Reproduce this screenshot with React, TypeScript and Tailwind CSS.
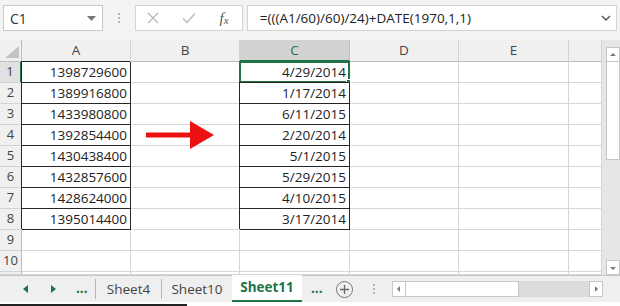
import React from "react";

const numbers = [
  "1398729600",
  "1389916800",
  "1433980800",
  "1392854400",
  "1430438400",
  "1432857600",
  "1428624000",
  "1395014400",
];

const dates = [
  "4/29/2014",
  "1/17/2014",
  "6/11/2015",
  "2/20/2014",
  "5/1/2015",
  "5/29/2015",
  "4/10/2015",
  "3/17/2014",
];

const columns = ["A", "B", "C", "D", "E", ""];
const GREEN = "#217346";

function HeaderCell({ label, selected }: { label: string; selected?: boolean }) {
  return (
    <div
      className={`flex items-center justify-center border-r border-b text-[13.5px] ${
        selected
          ? "bg-[#d2d2d2] text-[#217346] border-r-[#c0c0c0] border-b-2 border-b-[#217346]"
          : "bg-[#f0f0f0] text-[#444] border-r-[#d4d4d4] border-b-[#bdbdbd]"
      }`}
    >
      {label}
    </div>
  );
}

function Cell({
  value,
  boxed,
  selected,
}: {
  value?: string;
  boxed?: boolean;
  selected?: boolean;
}) {
  return (
    <div
      className={`relative flex items-center justify-end bg-white pr-[3px] text-[13.5px] text-[#222] border-r border-b ${
        boxed
          ? "border-[#262626] shadow-[-1px_-1px_0_#262626]"
          : "border-[#d6d6d6]"
      }`}
    >
      {value}
      {selected && (
        <>
          <div className="absolute -left-px -top-px -right-px -bottom-px border-2 border-[#217346]" />
          <div className="absolute -right-[3px] -bottom-[3px] h-[5px] w-[5px] bg-[#217346] outline outline-1 outline-white" />
        </>
      )}
    </div>
  );
}

function ScrollButton({ dir }: { dir: "up" | "down" }) {
  const pts = dir === "up" ? "2,6 5,3 8,6" : "2,4 5,7 8,4";
  return (
    <div className="flex h-[15px] w-[14px] items-center justify-center border border-[#c6c6c6] bg-white">
      <svg width="10" height="10" viewBox="0 0 10 10">
        <polygon points={pts} fill="#7a7a7a" />
      </svg>
    </div>
  );
}

export default function App() {
  return (
    <div className="h-[306px] w-[620px] overflow-hidden bg-[#f3f3f3] font-['Open_Sans',sans-serif]">
      {/* Formula bar */}
      <div className="flex h-[40px] items-start px-[3px] pt-[5px]">
        <div className="flex h-[26px] w-[100px] items-center justify-between border border-[#c9c9c9] bg-white pl-[6px] pr-[6px] text-[14px] text-[#333]">
          <span>C1</span>
          <svg width="9" height="5" viewBox="0 0 9 5">
            <polygon points="0,0 9,0 4.5,5" fill="#777" />
          </svg>
        </div>
        <div className="flex h-[26px] w-[32px] flex-col items-center justify-center gap-[2px]">
          <span className="h-[2px] w-[2px] bg-[#b5b5b5]" />
          <span className="h-[2px] w-[2px] bg-[#b5b5b5]" />
          <span className="h-[2px] w-[2px] bg-[#b5b5b5]" />
        </div>
        <div className="flex h-[26px] w-[108px] items-center border border-[#d4d4d4] bg-white">
          <div className="flex w-[36px] justify-center">
            <svg width="12" height="12" viewBox="0 0 12 12">
              <path d="M1 1 L11 11 M11 1 L1 11" stroke="#b8b8b8" strokeWidth="1.3" />
            </svg>
          </div>
          <div className="flex w-[36px] justify-center">
            <svg width="14" height="12" viewBox="0 0 14 12">
              <path d="M1 6.5 L5 10.5 L13 1.5" stroke="#b8b8b8" strokeWidth="1.3" fill="none" />
            </svg>
          </div>
          <div className="flex w-[36px] items-baseline justify-center font-['Liberation_Serif',serif] italic text-[#555]">
            <span className="text-[15px] leading-none">f</span>
            <span className="text-[11px] leading-none translate-y-[1px]">x</span>
          </div>
        </div>
        <div className="ml-[4px] flex h-[26px] w-[371px] items-center justify-between border border-[#d4d4d4] bg-white pl-[12px] pr-[5px] text-[13.5px] text-[#222]">
          <span>=(((A1/60)/60)/24)+DATE(1970,1,1)</span>
          <svg width="10" height="6" viewBox="0 0 10 6">
            <path d="M1 1 L5 5 L9 1" stroke="#555" strokeWidth="1.4" fill="none" />
          </svg>
        </div>
      </div>

      {/* Sheet area */}
      <div className="flex h-[235px]">
        <div className="relative grid w-[602px] grid-cols-[22px_109px_109px_110px_109px_110px_33px] grid-rows-[22px_repeat(10,21px)_3px] border-r border-[#c6c6c6] bg-white">
          <div className="flex items-end justify-end border-r border-b border-[#bdbdbd] bg-[#f0f0f0] pb-[3px] pr-[2px]">
            <svg width="14" height="12" viewBox="0 0 14 12">
              <polygon points="14,0 14,12 0,12" fill="#c4c4c4" />
            </svg>
          </div>
          {columns.map((c, i) => (
            <HeaderCell key={i} label={c} selected={c === "C"} />
          ))}

          {Array.from({ length: 11 }).map((_, r) => (
            <React.Fragment key={r}>
              <div
                className={`flex items-center justify-center border-b text-[13px] text-[#444] ${
                  r === 0
                    ? "bg-[#e1e1e1] border-r-2 border-r-[#217346] border-b-[#d4d4d4]"
                    : "bg-[#f0f0f0] border-r border-r-[#bdbdbd] border-b-[#d4d4d4]"
                }`}
              >
                {r < 10 ? r + 1 : ""}
              </div>
              <Cell value={numbers[r]} boxed={r < 8} />
              <Cell />
              <Cell value={dates[r]} boxed={r < 8} selected={r === 0} />
              <Cell />
              <Cell />
              <Cell />
            </React.Fragment>
          ))}

          {/* red arrow */}
          <svg
            className="absolute left-[146px] top-[81px]"
            width="68"
            height="28"
            viewBox="0 0 68 28"
          >
            <rect x="0" y="11.5" width="46" height="5" fill="#ee1111" />
            <polygon points="44,0 68,14 44,28" fill="#ee1111" />
          </svg>
        </div>

        {/* vertical scrollbar */}
        <div className="flex w-[18px] flex-col bg-[#e6e6e6] pl-[4px] pt-[7px]">
          <ScrollButton dir="up" />
          <div className="h-[98px] w-[14px] border-x border-b border-[#c6c6c6] bg-white" />
          <div className="flex-1" />
          <ScrollButton dir="down" />
        </div>
      </div>

      {/* Sheet tabs */}
      <div className="flex h-[27px] items-center border-t border-[#c6c6c6] bg-[#efefef] text-[13.5px] text-[#444]">
        <div className="ml-[18px] flex w-[14px] justify-center">
          <svg width="5" height="8" viewBox="0 0 5 8">
            <polygon points="5,0 0,4 5,8" fill={GREEN} />
          </svg>
        </div>
        <div className="ml-[14px] flex w-[14px] justify-center">
          <svg width="5" height="8" viewBox="0 0 5 8">
            <polygon points="0,0 5,4 0,8" fill={GREEN} />
          </svg>
        </div>
        <span className="ml-[16px] w-[12px] font-bold leading-none text-[#217346]">...</span>
        <span className="ml-[7px] h-[20px] w-px bg-[#b4b4b4]" />
        <div className="flex w-[65px] justify-center">Sheet4</div>
        <span className="h-[20px] w-px bg-[#b4b4b4]" />
        <div className="flex w-[70px] justify-center">Sheet10</div>
        <div className="-mt-px flex h-[27px] w-[70px] items-center justify-center self-start border-b-2 border-[#217346] bg-white font-bold text-[#217346]">
          Sheet11
        </div>
        <span className="ml-[9px] w-[12px] font-bold leading-none text-[#217346]">...</span>
        <div className="ml-[13px] flex h-[17px] w-[17px] items-center justify-center rounded-full border border-[#777]">
          <svg width="9" height="9" viewBox="0 0 9 9">
            <path d="M4.5 0 V9 M0 4.5 H9" stroke="#666" strokeWidth="1.3" />
          </svg>
        </div>
        <div className="ml-[20px] flex w-[2px] flex-col gap-[2px]">
          <span className="h-[2px] w-[2px] bg-[#b5b5b5]" />
          <span className="h-[2px] w-[2px] bg-[#b5b5b5]" />
          <span className="h-[2px] w-[2px] bg-[#b5b5b5]" />
        </div>
        <div className="ml-[17px] flex h-[16px] w-[211px] items-stretch bg-[#dcdcdc]">
          <div className="flex w-[14px] items-center justify-center border border-[#c6c6c6] bg-white">
            <svg width="10" height="10" viewBox="0 0 10 10">
              <polygon points="6,2 3,5 6,8" fill="#7a7a7a" />
            </svg>
          </div>
          <div className="w-[113px] border-y border-r border-[#c6c6c6] bg-white" />
          <div className="flex-1" />
          <div className="flex w-[14px] items-center justify-center border border-[#c6c6c6] bg-white">
            <svg width="10" height="10" viewBox="0 0 10 10">
              <polygon points="4,2 7,5 4,8" fill="#7a7a7a" />
            </svg>
          </div>
        </div>
      </div>
      <div className="flex h-[4px] flex-col justify-end bg-white">
        <div className="h-[2px] w-[187px] bg-[#222]" />
      </div>
    </div>
  );
}
